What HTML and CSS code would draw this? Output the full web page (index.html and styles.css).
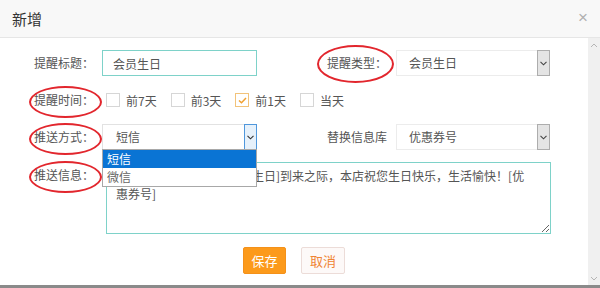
FILE: index.html
```html
<!DOCTYPE html>
<html lang="zh-CN">
<head>
  <meta charset="UTF-8">
  <title>新增</title>
  <link rel="stylesheet" href="styles.css">
</head>
<body>
  <div class="modal">
    <div class="modal-header">
      <h4 class="modal-title">新增</h4>
      <span class="close">×</span>
    </div>

    <div class="modal-body">
      <form class="form">
        <div class="row">
          <label class="label">提醒标题：</label>
          <input class="input" type="text" value="会员生日">
          <label class="label label-right marked marked-right">提醒类型：</label>
          <div class="select">
            <span class="select-text">会员生日</span>
            <span class="select-arrow"><svg width="7" height="5" viewBox="0 0 7 5"><polyline points="0.5,0.8 3.5,3.8 6.5,0.8" fill="none" stroke="#444" stroke-width="1.1"/></svg></span>
          </div>
        </div>

        <div class="row row-checks">
          <label class="label marked">提醒时间：</label>
          <div class="checks">
            <span class="check"><span class="box"></span>前7天</span>
            <span class="check"><span class="box"></span>前3天</span>
            <span class="check"><span class="box checked"><svg width="9" height="7" viewBox="0 0 9 7"><polyline points="1,3.5 3.5,5.8 8,1" fill="none" stroke="#f0a030" stroke-width="1.5"/></svg></span>前1天</span>
            <span class="check"><span class="box"></span>当天</span>
          </div>
        </div>

        <div class="row">
          <label class="label marked">推送方式：</label>
          <div class="select select-open">
            <span class="select-text">短信</span>
            <span class="select-arrow"><svg width="7" height="5" viewBox="0 0 7 5"><polyline points="0.5,0.8 3.5,3.8 6.5,0.8" fill="none" stroke="#333" stroke-width="1.1"/></svg></span>
            <ul class="options">
              <li class="active">短信</li>
              <li>微信</li>
            </ul>
          </div>
          <label class="label label-right">替换信息库</label>
          <div class="select">
            <span class="select-text">优惠券号</span>
            <span class="select-arrow"><svg width="7" height="5" viewBox="0 0 7 5"><polyline points="0.5,0.8 3.5,3.8 6.5,0.8" fill="none" stroke="#444" stroke-width="1.1"/></svg></span>
          </div>
        </div>

        <div class="row row-top">
          <label class="label marked">推送信息：</label>
          <textarea class="textarea">亲爱的顾客，在您的[会员生日]到来之际，本店祝您生日快乐，生活愉快！[优惠券号]</textarea>
        </div>

        <div class="actions">
          <button type="button" class="btn btn-save">保存</button>
          <button type="button" class="btn btn-cancel">取消</button>
        </div>
      </form>

      <div class="scrollbar">
        <svg width="8" height="5" viewBox="0 0 8 5"><polyline points="1,4 4,1 7,4" fill="none" stroke="#b5b5b5" stroke-width="1"/></svg>
        <svg width="8" height="5" viewBox="0 0 8 5"><polyline points="1,1 4,4 7,1" fill="none" stroke="#b5b5b5" stroke-width="1"/></svg>
      </div>
    </div>
  </div>
</body>
</html>
```

FILE: styles.css
```css
* {
  box-sizing: border-box;
}
body {
  margin: 0;
  font-family: "Noto Sans CJK TC", "Noto Sans CJK SC", "Liberation Sans", sans-serif;
  font-size: 12px;
  color: #555;
  background: #fff;
}
.modal {
  width: 600px;
  height: 288px;
  display: flex;
  flex-direction: column;
  border-bottom: 3px solid #8a8a8a;
}
.modal-header {
  height: 38px;
  display: flex;
  align-items: center;
  justify-content: space-between;
  padding: 0 12px 1px 12px;
  background: #f8f8f8;
  border-bottom: 1px solid #e6e6e6;
}
.modal-title {
  margin: 0;
  font-size: 15px;
  font-weight: normal;
  color: #333;
}
.close {
  font-size: 17px;
  color: #b0b0b0;
  font-family: "Liberation Sans", sans-serif;
}
.modal-body {
  flex: 1;
  display: flex;
}
.form {
  flex: 1;
  margin: 0;
  padding-top: 12px;
}
.scrollbar {
  width: 12px;
  background: #f0f0f0;
  display: flex;
  flex-direction: column;
  justify-content: space-between;
  align-items: center;
  padding: 5px 0 4px;
}
.row {
  display: flex;
  align-items: center;
  height: 26px;
  margin-bottom: 12px;
}
.row-checks {
  height: 24px;
}
.row-top {
  align-items: flex-start;
  height: 72px;
  margin-bottom: 13px;
}
.label {
  position: relative;
  width: 102px;
  flex: none;
  height: 26px;
  line-height: 26px;
  padding-right: 8px;
  text-align: right;
  color: #555;
}
.label-right {
  width: 139px;
  padding-right: 9px;
}
.marked::after {
  content: "";
  position: absolute;
  left: 29px;
  top: -1px;
  width: 69px;
  height: 28px;
  border: 2px solid #e2262d;
  border-radius: 50%;
}
.marked-right::after {
  left: 60px;
  top: -5px;
  width: 73px;
  height: 34px;
}
.input {
  width: 155px;
  height: 26px;
  padding: 0 10px;
  border: 1px solid #7ed2c9;
  font: inherit;
  color: #555;
  outline: none;
}
.select {
  position: relative;
  width: 154px;
  height: 26px;
  display: flex;
  align-items: stretch;
  border: 1px solid #ececec;
  background: #fff;
}
.select-open {
  width: 155px;
  border-color: #e2e2e2;
}
.select-text {
  flex: 1;
  line-height: 24px;
  padding-left: 12px;
  color: #555;
}
.select-open .select-text {
  padding-left: 13px;
}
.select-arrow {
  width: 13px;
  margin: -1px -1px -1px 0;
  display: flex;
  align-items: center;
  justify-content: center;
  background: #e4e4e4;
  border: 1px solid #adadad;
}
.select-open .select-arrow {
  background: #e6f1fb;
  border-color: #4f97dc;
}
.options {
  position: absolute;
  left: -1px;
  top: 24px;
  width: 155px;
  margin: 0;
  padding: 0;
  list-style: none;
  background: #fff;
  border: 1px solid #a8a8a8;
  z-index: 2;
}
.options li {
  height: 18px;
  line-height: 18px;
  padding-left: 4px;
  color: #666;
}
.options li.active {
  background: #0a74d4;
  color: #fff;
}
.checks {
  display: flex;
  align-items: center;
  margin-left: 4px;
}
.check {
  display: flex;
  align-items: center;
  margin-right: 14px;
  color: #555;
}
.box {
  width: 14px;
  height: 14px;
  margin-right: 6px;
  border: 1px solid #d6d6d6;
  display: flex;
  align-items: center;
  justify-content: center;
}
.box.checked {
  border-color: #f2c37a;
}
.textarea {
  width: 445px;
  height: 72px;
  margin-left: 4px;
  padding: 4px 22px 0 9px;
  border: 1px solid #7ed2c9;
  font: inherit;
  line-height: 18px;
  color: #555;
  resize: vertical;
  outline: none;
}
.actions {
  display: flex;
  justify-content: center;
  gap: 15px;
}
.btn {
  width: 43px;
  height: 27px;
  padding: 0;
  font: inherit;
  font-size: 13px;
  border-radius: 2px;
  cursor: pointer;
}
.btn-save {
  background: #fc9a1b;
  border: 1px solid #f4911a;
  color: #fff;
}
.btn-cancel {
  width: 44px;
  background: #fdf9f8;
  border: 1px solid #ecdcd8;
  color: #f08433;
}
```
